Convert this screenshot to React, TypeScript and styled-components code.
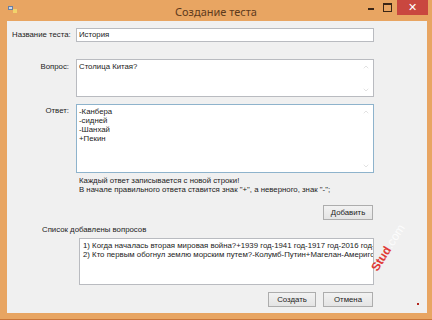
import styled, { createGlobalStyle } from 'styled-components';
import { ChevronUp, ChevronDown } from 'lucide-react';

const GlobalStyle = createGlobalStyle`
  html, body {
    margin: 0;
    padding: 0;
    background: #e8a562;
  }
  body {
    font-family: "Liberation Sans", Arial, sans-serif;
  }
`;

const Window = styled.div`
  position: relative;
  width: 432px;
  height: 320px;
  display: flex;
  flex-direction: column;
  background: #e8a562;
  overflow: hidden;
  box-sizing: border-box;
  border-bottom: 1px solid #c9763a;
`;

const TitleBar = styled.div`
  height: 21px;
  display: grid;
  grid-template-columns: 1fr auto 1fr;
  align-items: center;
`;

const AppIcon = styled.svg`
  margin-left: 8px;
  margin-top: -4px;
`;

const Title = styled.div`
  font-family: "Noto Sans", "Open Sans", sans-serif;
  font-size: 11px;
  color: #5e3a1c;
  padding-top: 1px;
`;

const Controls = styled.div`
  justify-self: end;
  align-self: start;
  display: flex;
  align-items: flex-start;
  margin-right: 4px;
`;

const MinButton = styled.div`
  width: 16px;
  height: 14px;
  display: flex;
  align-items: center;
  justify-content: center;
  &::before {
    content: '';
    width: 6px;
    height: 2px;
    margin-top: 3px;
    background: #3b2616;
  }
`;

const MaxButton = styled.div`
  width: 16px;
  height: 14px;
  display: flex;
  align-items: center;
  justify-content: center;
  margin-right: 2px;
  &::before {
    content: '';
    width: 7px;
    height: 6px;
    border: 1px solid #3b2616;
    border-top-width: 2px;
  }
`;

const CloseButton = styled.div`
  width: 31px;
  height: 15px;
  background: #c9473f;
  color: #fff;
  font-size: 11px;
  line-height: 14px;
  text-align: center;
`;

const Client = styled.div`
  flex: 1;
  margin: 0 5px 6px 7px;
  background: #f0f0f0;
  padding: 7px 0 0 5px;
  display: flex;
  flex-direction: column;
  font-size: 7.8px;
  color: #222;
`;

const FieldRow = styled.div<{ $gap: number; $center?: boolean }>`
  display: grid;
  grid-template-columns: 57px 298px;
  column-gap: 7px;
  align-items: ${({ $center }) => ($center ? 'center' : 'start')};
  margin-top: ${({ $gap }) => $gap}px;
`;

const Label = styled.div<{ $top?: number }>`
  text-align: right;
  line-height: 10px;
  white-space: nowrap;
  padding-top: ${({ $top }) => $top ?? 0}px;
`;

const TextInput = styled.div`
  height: 14px;
  box-sizing: border-box;
  border: 1px solid #b9bbc0;
  background: #fff;
  padding-left: 2px;
  line-height: 12px;
`;

const TextBox = styled.div<{ $height: number; $focused?: boolean }>`
  height: ${({ $height }) => $height}px;
  box-sizing: border-box;
  border: 1px solid ${({ $focused }) => ($focused ? '#8eb3cc' : '#b9bbc0')};
  background: #fff;
  display: flex;
`;

const BoxText = styled.div`
  flex: 1;
  padding: 2px 2px;
  line-height: 9px;
  white-space: pre;
`;

const ScrollBar = styled.div`
  width: 15px;
  display: flex;
  flex-direction: column;
  justify-content: space-between;
  align-items: center;
  padding: 3px 0 2px;
  color: #c4c4c4;
`;

const Hint = styled.div`
  margin: 3px 0 0 67px;
  line-height: 9px;
`;

const ButtonRow = styled.div<{ $gap: number }>`
  display: flex;
  justify-content: flex-end;
  gap: 7px;
  padding-right: 54px;
  margin-top: ${({ $gap }) => $gap}px;
`;

const Button = styled.div<{ $width: number }>`
  width: ${({ $width }) => $width}px;
  height: 15px;
  box-sizing: border-box;
  border: 1px solid #adadad;
  background: linear-gradient(#f2f2f2, #e4e4e4);
  text-align: center;
  line-height: 13px;
`;

const ListLabel = styled.div`
  margin: 5px 0 0 30px;
  line-height: 10px;
`;

const ListBox = styled.div`
  margin: 3px 0 0 67px;
  width: 295px;
  height: 47px;
  box-sizing: border-box;
  border: 1px solid #b9bbc0;
  background: #fff;
  padding: 2px 0 0 3px;
  overflow: hidden;
`;

const ListItem = styled.div`
  line-height: 9px;
  white-space: nowrap;
`;

const Watermark = styled.div`
  position: absolute;
  left: 374px;
  top: 264px;
  width: max-content;
  transform: rotate(-58deg);
  transform-origin: 0 50%;
  font-size: 12px;
  line-height: 12px;
  font-weight: bold;
  white-space: nowrap;
  color: #e03a36;
`;

const WatermarkTail = styled.span`
  color: rgba(255, 255, 255, 0.85);
  font-weight: normal;
`;

const Dot = styled.div`
  position: absolute;
  left: 417px;
  top: 303px;
  width: 2px;
  height: 2px;
  background: #b3261e;
`;

const Scroll = () => (
  <ScrollBar>
    <ChevronUp size={8} strokeWidth={1.5} />
    <ChevronDown size={8} strokeWidth={1.5} />
  </ScrollBar>
);

export default function App() {
  return (
    <>
      <GlobalStyle />
      <Window>
        <TitleBar>
          <AppIcon width="9" height="8" viewBox="0 0 9 8">
            <rect x="0" y="1" width="5" height="4" fill="#6b7fa0" />
            <rect x="1" y="2" width="3" height="2" fill="#c9d6ea" />
            <rect x="5" y="4" width="4" height="4" fill="#f2d36b" />
          </AppIcon>
          <Title>Создание теста</Title>
          <Controls>
            <MinButton />
            <MaxButton />
            <CloseButton>✕</CloseButton>
          </Controls>
        </TitleBar>
        <Client>
          <FieldRow $gap={0} $center>
            <Label>Название теста:</Label>
            <TextInput>История</TextInput>
          </FieldRow>
          <FieldRow $gap={17}>
            <Label $top={3}>Вопрос:</Label>
            <TextBox $height={38}>
              <BoxText>Столица Китая?</BoxText>
              <Scroll />
            </TextBox>
          </FieldRow>
          <FieldRow $gap={7}>
            <Label $top={2}>Ответ:</Label>
            <TextBox $height={69} $focused>
              <BoxText>{'-Канбера\n-сидней\n-Шанхай\n+Пекин'}</BoxText>
              <Scroll />
            </TextBox>
          </FieldRow>
          <Hint>
            Каждый ответ записывается с новой строки!
            <br />В начале правильного ответа ставится знак &quot;+&quot;, а неверного, знак &quot;-&quot;;
          </Hint>
          <ButtonRow $gap={11}>
            <Button $width={50}>Добавить</Button>
          </ButtonRow>
          <ListLabel>Список добавлены вопросов</ListLabel>
          <ListBox>
            <ListItem>1) Когда началась вторая мировая война?+1939 год-1941 год-1917 год-2016 год-1918 год</ListItem>
            <ListItem>2) Кто первым обогнул землю морским путем?-Колумб-Путин+Магелан-Америго</ListItem>
          </ListBox>
          <ButtonRow $gap={7}>
            <Button $width={48}>Создать</Button>
            <Button $width={50}>Отмена</Button>
          </ButtonRow>
        </Client>
        <Watermark>
          Stud<WatermarkTail>.com</WatermarkTail>
        </Watermark>
        <Dot />
      </Window>
    </>
  );
}
